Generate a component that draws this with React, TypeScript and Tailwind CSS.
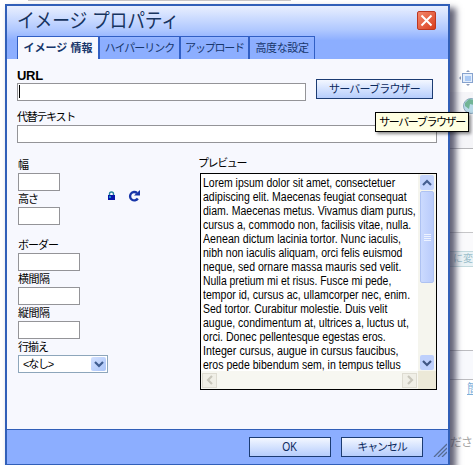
import { ReactNode } from 'react';

const preview: [string, string][] = [
  ['Lorem ipsum dolor sit amet, consectetuer', 'scale-x-[0.873]'],
  ['adipiscing elit. Maecenas feugiat consequat', 'scale-x-[0.877]'],
  ['diam. Maecenas metus. Vivamus diam purus,', 'scale-x-[0.877]'],
  ['cursus a, commodo non, facilisis vitae, nulla.', 'scale-x-[0.877]'],
  ['Aenean dictum lacinia tortor. Nunc iaculis,', 'scale-x-[0.889]'],
  ['nibh non iaculis aliquam, orci felis euismod', 'scale-x-[0.877]'],
  ['neque, sed ornare massa mauris sed velit.', 'scale-x-[0.877]'],
  ['Nulla pretium mi et risus. Fusce mi pede,', 'scale-x-[0.866]'],
  ['tempor id, cursus ac, ullamcorper nec, enim.', 'scale-x-[0.877]'],
  ['Sed tortor. Curabitur molestie. Duis velit', 'scale-x-[0.872]'],
  ['augue, condimentum at, ultrices a, luctus ut,', 'scale-x-[0.877]'],
  ['orci. Donec pellentesque egestas eros.', 'scale-x-[0.881]'],
  ['Integer cursus, augue in cursus faucibus,', 'scale-x-[0.894]'],
  ['eros pede bibendum sem, in tempus tellus', 'scale-x-[0.877]'],
];

function Tab({ children, className }: { children: ReactNode; className: string }) {
  return (
    <div className={`flex h-[23px] items-center justify-center whitespace-nowrap border-t border-[#315fc4] text-[11px] text-[#17366b] ${className}`}>
      {children}
    </div>
  );
}

function Field({ label, width, gap = '', tracking = 'tracking-[-0.5px]' }: { label: string; width: string; gap?: string; tracking?: string }) {
  return (
    <div className={gap}>
      <div className={`h-4 whitespace-nowrap text-[11px] leading-4 ${tracking}`}>{label}</div>
      <div className={`h-[18px] border border-[#949498] bg-white ${width}`} />
    </div>
  );
}

function Button({ children, className }: { children: ReactNode; className: string }) {
  return (
    <button className={`flex h-5 items-center justify-center whitespace-nowrap border border-[#1c3c73] bg-linear-to-b from-[#f3f7ff] to-[#b6cdfc] leading-none text-[#0c2a5e] ${className}`}>
      {children}
    </button>
  );
}

function Chevron({ d, color }: { d: string; color: string }) {
  return (
    <svg className="size-[10px]" viewBox="0 0 10 10" fill="none" stroke={color} strokeWidth="2.2">
      <path d={d} />
    </svg>
  );
}

const UP = 'M1 7 5 3 9 7';
const DOWN = 'M1 3 5 7 9 3';

function PageBehind() {
  return (
    <div className="flex h-full flex-col">
      <div className="ml-7 h-px w-[263px] shrink-0 bg-[#c9c6c6]" />
      <div className="ml-[450px] flex h-[91px] shrink-0 items-end justify-end">
        <svg className="mb-[6px] h-4 w-[14px]" viewBox="0 0 14 16" fill="none">
          <rect x="3.5" y="3.5" width="10" height="9" fill="#e4eefb" stroke="#87a3cf" />
          <rect x="6" y="6" width="6" height="5" fill="#a9c9f5" />
          <path d="M0 8 2 6v4zM9 0l2 2H7zM9 16l2-2H7z" fill="#8b9cba" />
        </svg>
      </div>
      <div className="ml-[450px] flex h-[57px] shrink-0 justify-end border-b border-[#b5b5b8] bg-[#f5f5f8]">
        <svg className="mt-[5px] h-[17px] w-[11px]" viewBox="0 0 11 17" fill="none">
          <circle cx="9" cy="9" r="7.5" fill="#b9d9e8" stroke="#8ba9be" />
          <path d="M3 6 7 2 12 3v5L8 7 7 12 3 9z" fill="#71b495" />
        </svg>
      </div>
      <div className="ml-[450px] h-[83px] shrink-0 bg-white" />
      <div className="ml-[450px] h-[35px] shrink-0 border-t border-[#c6c6c8] bg-[#fafafc] pt-[18px]">
        <div className="h-[16px] overflow-hidden whitespace-nowrap border-y border-[#c3dade] bg-[#eaf3f6] pl-[3px] text-[10px] leading-[14px] text-[#9cbfcb]">に変</div>
      </div>
      <div className="ml-[450px] h-[83px] shrink-0 bg-white" />
      <div className="ml-[450px] h-[30px] shrink-0 border-y border-[#bcbcc0] bg-[#f8f9fd]" />
      <div className="ml-[467px] h-[54px] shrink-0 overflow-hidden whitespace-nowrap text-[12px] text-[#7eafd9] underline">簡</div>
      <div className="ml-[450px] shrink-0 overflow-hidden whitespace-nowrap text-[12px] leading-[18px] tracking-[-1px] text-[#a5a5a5]">ださい</div>
    </div>
  );
}

export default function App() {
  return (
    <div className="relative h-[465px] w-[473px] overflow-hidden bg-white font-['Liberation_Sans','Noto_Sans_CJK_JP',sans-serif] text-black">
      <PageBehind />

      <div className="absolute top-1 left-[5px] flex h-[461px] w-[445px] flex-col border-2 border-b-[1px] border-[#315fb8] bg-[#f7f8fe] shadow-[5px_5px_6px_1px_rgba(50,50,75,0.75)]">
        <header className="h-[53px] shrink-0 bg-linear-to-b from-[#e9effe] via-[#b0c8ff] via-45% to-[#8caeff] to-65%">
          <div className="flex h-[30px] items-start justify-between pr-3 pl-[10px]">
            <h1 className="origin-left scale-x-[0.89] pt-[3px] text-[20px] leading-6 tracking-[-0.2px] whitespace-nowrap text-[#17345f]">イメージ プロパティ</h1>
            <button className="mt-[5px] flex size-[19px] items-center justify-center rounded-[2px] border border-[#bd3721] bg-linear-to-br from-[#f3866a] to-[#d83b18]">
              <svg className="size-[13px]" viewBox="0 0 13 13" stroke="white" strokeWidth="2"><path d="m1.5 1.5 10 10m0-10-10 10" /></svg>
            </button>
          </div>
          <div className="ml-[10px] flex">
            <Tab className="w-[83px] border-r-2 border-l bg-[#f7f8fe] font-bold">イメージ 情報</Tab>
            <Tab className="w-[81px] border-r-2 tracking-[-1px]">ハイパーリンク</Tab>
            <Tab className="w-[69px] border-r-2 tracking-[-1.2px]">アップロード</Tab>
            <Tab className="w-[65px] border-r tracking-[-0.4px]">高度な設定</Tab>
          </div>
        </header>

        <main className="min-h-0 grow px-[10px]">
          <div className="flex h-[43px] justify-between pr-[5px]">
            <div className="pt-[9px]">
              <div className="h-[15px] text-[13px] leading-[15px] font-bold tracking-[-0.3px]">URL</div>
              <div className="h-[18px] w-[289px] border border-[#949498] bg-white pt-px pl-px">
                <div className="h-[13px] w-px bg-black" />
              </div>
            </div>
            <Button className="mt-5 w-[117px] text-[11px] tracking-[-0.8px]">サーバーブラウザー</Button>
          </div>
          <Field label="代替テキスト" width="w-[420px]" gap="pt-[7px]" tracking="tracking-[-1.3px]" />

          <div className="flex justify-between pt-[14px] pr-px pl-px">
            <div className="flex">
              <div>
                <Field label="幅" width="w-[42px]" />
                <Field label="高さ" width="w-[42px]" tracking="tracking-[-1px]" />
                <Field label="ボーダー" width="w-[62px]" gap="pt-3" tracking="tracking-[-1px]" />
                <Field label="横間隔" width="w-[62px]" />
                <Field label="縦間隔" width="w-[62px]" />
                <div className="h-4 text-[11px] leading-4 tracking-[-1px]">行揃え</div>
                <div className="flex h-[18px] w-[90px] items-center justify-between border border-[#8da6bb] bg-white pr-px pl-1 text-[11px] tracking-[-1.2px]">
                  <span>&lt;なし&gt;</span>
                  <span className="flex h-[14px] w-[15px] items-center justify-center rounded-[2px] bg-linear-to-br from-[#d3e1ff] to-[#aac4f8]"><Chevron d={DOWN} color="#3f5d90" /></span>
                </div>
              </div>
              <div className="flex items-start gap-[13px] pt-[33px]">
                <svg className="-ml-px h-3 w-[9px]" viewBox="0 0 9 12" fill="none">
                  <path d="M2.5 6V4q0-2 2-2t2 2v2" stroke="#25849b" strokeWidth="1.4" />
                  <path d="M1 5h7v5H1z" fill="#0915a8" /><path d="M2 6h2v2H2z" fill="#168dca" />
                </svg>
                <svg className="-ml-px h-3 w-3" viewBox="0 0 12 12" fill="none">
                  <path d="M9.8 8.5A4.2 4.2 0 1 1 9 3" stroke="#1735a8" strokeWidth="2.4" />
                  <path d="M6 5.5h6V0z" fill="#1735a8" />
                </svg>
              </div>
            </div>

            <div className="w-[237px]">
              <div className="-ml-0.5 h-4 text-[11px] leading-[13px] tracking-[-1.4px]">プレビュー</div>
              <div className="flex h-[217px] flex-col border border-black bg-white">
                <div className="flex h-[197px] overflow-hidden">
                  <div className="w-[217px] shrink-0 pt-[2px] pl-[2px] text-[12px] leading-[14px]">
                    {preview.map(([line, scale]) => (
                      <div key={line} className={`h-[14px] w-max origin-left whitespace-nowrap ${scale}`}>{line}</div>
                    ))}
                  </div>
                  <div className="flex w-[18px] flex-col items-center bg-[#f5f5ee] pt-px">
                    <div className="flex h-[15px] w-[14px] shrink-0 items-center justify-center rounded-[2px] bg-[#c5d5fd]"><Chevron d={UP} color="#465f91" /></div>
                    <div className="mt-px flex h-[92px] w-[14px] shrink-0 flex-col items-center justify-center gap-px rounded-[2px] border border-[#aec2f2] bg-linear-to-r from-[#cbdafe] to-[#b9cbfb]">
                      <i className="h-px w-[7px] bg-[#edf3ff]" /><i className="h-px w-[7px] bg-[#edf3ff]" /><i className="h-px w-[7px] bg-[#edf3ff]" /><i className="h-px w-[7px] bg-[#edf3ff]" />
                    </div>
                    <div className="mt-auto mb-px flex h-[15px] w-[14px] shrink-0 items-center justify-center rounded-[2px] bg-[#bed0fc]"><Chevron d={DOWN} color="#3f5684" /></div>
                  </div>
                </div>
                <div className="flex h-[18px] items-center justify-between bg-[#f7f7f1] pl-px">
                  <div className="flex size-[15px] items-center justify-center border border-[#dedcd2] bg-[#f0efe7]"><Chevron d="M7 1 3 5 7 9" color="#c8c6bb" /></div>
                  <div className="flex h-full items-center">
                    <div className="mr-px flex size-[15px] items-center justify-center border border-[#dedcd2] bg-[#f0efe7]"><Chevron d="M3 1 7 5 3 9" color="#c8c6bb" /></div>
                    <div className="h-full w-[18px] bg-[#ece9d8]" />
                  </div>
                </div>
              </div>
            </div>
          </div>
        </main>

        <footer className="flex h-[35px] shrink-0 items-start border-t border-[#315fb8] bg-[#8caeff] pt-[7px]">
          <Button className="ml-[242px] w-[82px] text-[12px]"><span className="scale-x-[0.85]">OK</span></Button>
          <Button className="ml-[10px] w-[82px] text-[11px] tracking-[-1.1px]">キャンセル</Button>
          <svg className="mt-[6px] mr-px ml-auto h-[14px] w-[14px]" viewBox="0 0 14 14" stroke="#566b91" strokeWidth="1.3"><path d="M1 14 14 1M5 14l9-9M9 14l5-5" /></svg>
        </footer>
      </div>

      <div className="absolute top-28 left-[375px] flex h-5 w-[94px] items-center justify-center border border-black bg-[#ffffe1] text-[11px] tracking-[-1.4px] whitespace-nowrap shadow-[2px_2px_3px_rgba(0,0,0,0.45)]">サーバーブラウザー</div>
    </div>
  );
}
